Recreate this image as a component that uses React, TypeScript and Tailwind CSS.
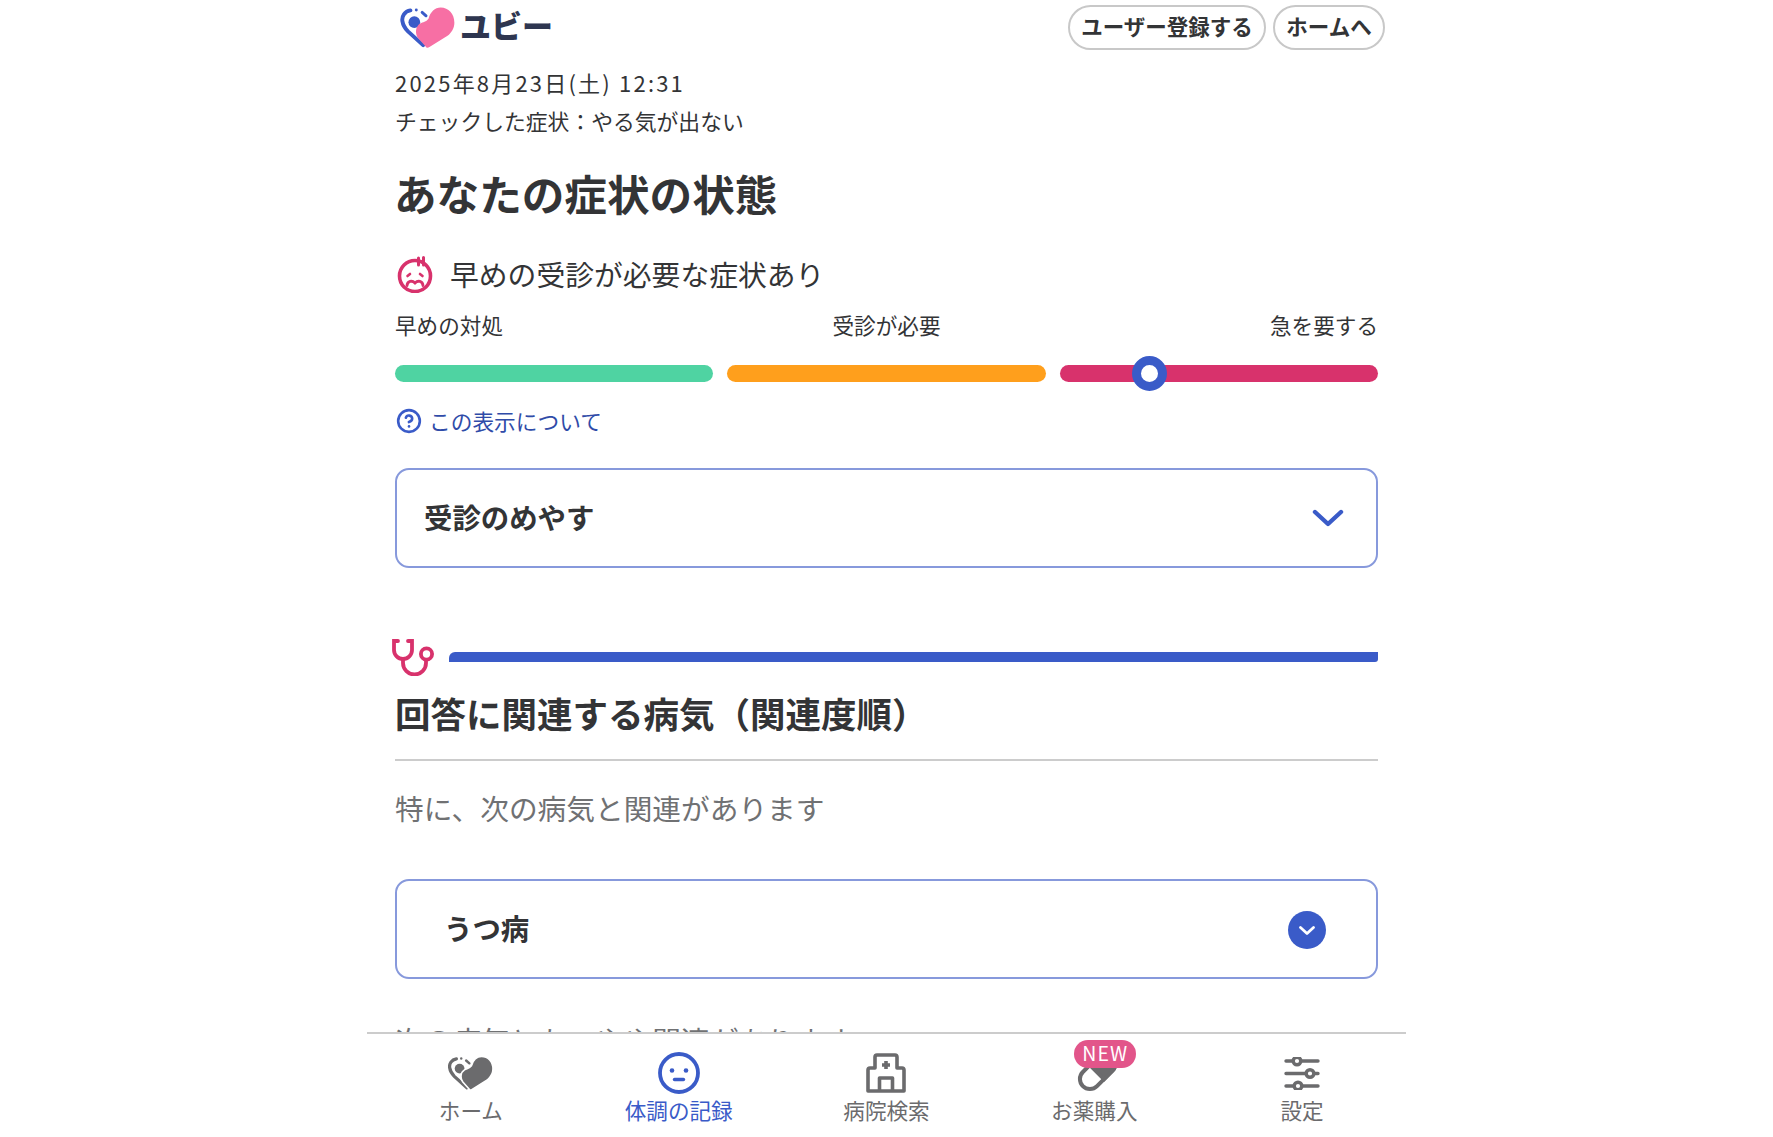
import React from "react";
import { CircleHelp } from "lucide-react";

const font = "font-['Noto_Sans_CJK_JP','Noto_Sans',sans-serif]";

// ロゴのハート（ナビでは色違いで使う）
function HeartMark({
  ring,
  heart,
  gap,
  className,
}: {
  ring: string;
  heart: string;
  gap?: string;
  className: string;
}) {
  return (
    <svg viewBox="0 0 56 43" className={className}>
      <path
        d="M10 3.5C4 4.5 1 9.5 1.8 14.5C2.4 18.5 4.5 22 7.5 25L23 39"
        fill="none"
        stroke={ring}
        strokeWidth="4"
        strokeLinecap="round"
      />
      <circle cx="16" cy="3" r="1.5" fill={ring} />
      <path d="M22 5.5L26 9" fill="none" stroke={ring} strokeWidth="3" strokeLinecap="round" />
      <circle cx="14" cy="15.5" r="6" fill={ring} />
      <path
        d="M26.7 41.7L18 32C14.5 27.5 15 20 20 17C23 15.2 26 15.5 28.5 12C30.5 5 35 0.5 41 0.5C49 0.5 55 7 55 16C55 22 52 26 48 29.5L29.5 41C28.5 41.7 27.5 42 26.7 41.7Z"
        fill={heart}
        stroke={gap ?? "none"}
        strokeWidth={gap ? 2 : 0}
      />
    </svg>
  );
}

function WorriedFace() {
  return (
    <svg viewBox="0 0 36 37" className="h-[37px] w-[36px]" fill="none" stroke="#d8326c" strokeLinecap="round">
      <circle cx="18" cy="20" r="15.5" strokeWidth="3.6" />
      <path d="M21.5 2V9M26.5 1.5V9" strokeWidth="3" />
      <path d="M10.5 20L13 18M25.5 20L23 18" strokeWidth="2.6" />
      <path d="M10 29.5C10.5 25 15 24 18 27C21 24 25.5 25 26 29.5" strokeWidth="2.8" />
    </svg>
  );
}

function Stethoscope() {
  return (
    <svg viewBox="0 0 43 37" className="h-[37px] w-[43px] shrink-0" fill="none" stroke="#d8326c" strokeWidth="3.8" strokeLinecap="round">
      <path d="M7 2H3V11A9 9 0 0 0 21 11V2H17" />
      <path d="M12 20V24A11.5 11.5 0 0 0 35 24V21" />
      <circle cx="35.5" cy="15" r="5.6" />
    </svg>
  );
}

function Chevron({ className, stroke, width }: { className: string; stroke: string; width: number }) {
  return (
    <svg viewBox="0 0 32 18" className={className} fill="none" stroke={stroke} strokeWidth={width} strokeLinecap="round" strokeLinejoin="round">
      <path d="M3 3L16 15L29 3" />
    </svg>
  );
}

function Hospital() {
  return (
    <svg viewBox="0 0 40 40" className="h-[40px] w-[40px]" fill="none" stroke="#6b6b6d" strokeWidth="3.6" strokeLinejoin="round">
      <path d="M2 38V17A2 2 0 0 1 4 15H9V4A2 2 0 0 1 11 2H29A2 2 0 0 1 31 4V15H36A2 2 0 0 1 38 17V38Z" />
      <path d="M13.5 38V25H26.5V38" />
      <path d="M20 8V16M16 12H24" />
    </svg>
  );
}

function Pill() {
  return (
    <svg viewBox="0 0 46 46" className="h-[46px] w-[46px]">
      <g transform="rotate(-45 26 22)">
        <rect x="6" y="12" width="42" height="20" rx="10" fill="#fff" stroke="#6b6b6d" strokeWidth="4" />
        <path d="M26 12H38A10 10 0 0 1 38 32H26Z" fill="#6b6b6d" stroke="#6b6b6d" strokeWidth="4" />
      </g>
    </svg>
  );
}

function Sliders() {
  return (
    <svg viewBox="0 0 36 33" className="h-[33px] w-[36px]" fill="none" stroke="#6b6b6d" strokeWidth="3.4" strokeLinecap="round">
      <path d="M2 4H34M2 16.5H34M2 29H34" />
      <circle cx="13" cy="4" r="3.8" fill="#fff" />
      <circle cx="26" cy="16.5" r="3.8" fill="#fff" />
      <circle cx="14" cy="29" r="3.8" fill="#fff" />
    </svg>
  );
}

function FaceNav() {
  return (
    <svg viewBox="0 0 42 42" className="h-[42px] w-[42px]" fill="none" stroke="#3a5bc8">
      <circle cx="21" cy="21" r="19" strokeWidth="3.8" />
      <circle cx="14" cy="18.5" r="2.3" fill="#3a5bc8" stroke="none" />
      <circle cx="28" cy="18.5" r="2.3" fill="#3a5bc8" stroke="none" />
      <path d="M16.5 27.5H25.5" strokeWidth="3.4" strokeLinecap="round" />
    </svg>
  );
}

const navItems = [
  { label: "ホーム", icon: <HeartMark ring="#6b6b6d" heart="#6b6b6d" gap="#fff" className="h-[35px] w-[46px]" /> },
  { label: "体調の記録", icon: <FaceNav />, active: true },
  { label: "病院検索", icon: <Hospital /> },
  { label: "お薬購入", icon: <Pill />, badge: true },
  { label: "設定", icon: <Sliders /> },
];

export default function App() {
  return (
    <div className={`${font} flex h-screen flex-col items-center overflow-hidden bg-white text-[#333436]`}>
      <div className="flex h-full w-[1039px] flex-col">
        <main className="flex-1 overflow-hidden px-[28px]">
          {/* ヘッダー */}
          <header className="flex h-[50px] items-start justify-between pt-[5px]">
            <div className="ml-[5px] flex items-start gap-[4px] pt-[2px]">
              <HeartMark ring="#3a5bc8" heart="#f76fa4" className="h-[42px] w-[56px]" />
              <span className="text-[31px] leading-[36px] font-black text-[#2e3650]">ユビー</span>
            </div>
            <div className="-mr-[7px] flex gap-[7px]">
              <button className="h-[45px] w-[198px] rounded-full border-2 border-[#c8c8c8] pb-[3px] text-[21.5px] leading-none font-bold">
                ユーザー登録する
              </button>
              <button className="h-[45px] w-[112px] rounded-full border-2 border-[#c8c8c8] pb-[3px] text-[21.5px] leading-none font-bold">
                ホームへ
              </button>
            </div>
          </header>

          <p className="mt-[16px] text-[22px] leading-[32px] tracking-[0.1em]">2025年8月23日(土) 12:31</p>
          <p className="mt-[7px] text-[21.8px] leading-[32px]">チェックした症状：やる気が出ない</p>

          <h1 className="mt-[28px] -ml-[1px] text-[42.6px] leading-[56px] font-bold">あなたの症状の状態</h1>

          <div className="mt-[33px] flex h-[40px] items-center gap-[17px] pl-[2px]">
            <WorriedFace />
            <span className="text-[28.8px] leading-[40px]">早めの受診が必要な症状あり</span>
          </div>

          {/* 緊急度バー */}
          <div className="mt-[16px] flex justify-between text-[21.6px] leading-[30px]">
            <span>早めの対処</span>
            <span>受診が必要</span>
            <span>急を要する</span>
          </div>
          <div className="mt-[25px] flex gap-[14px]">
            <div className="h-[17px] flex-1 rounded-full bg-[#4fd3a2]" />
            <div className="h-[17px] flex-1 rounded-full bg-[#ff9f1c]" />
            <div className="relative h-[17px] flex-1 rounded-full bg-[#d8326c]">
              <div className="absolute top-[-9px] left-[72px] h-[35px] w-[35px] rounded-full border-[9px] border-[#3a5bc8] bg-white" />
            </div>
          </div>

          <div className="mt-[24px] flex h-[30px] items-center gap-[7px] pl-[1px] text-[21.7px] leading-[30px] text-[#2f4ba8]">
            <CircleHelp className="h-[26px] w-[26px] text-[#3a5bc8]" strokeWidth={2.4} />
            <span>この表示について</span>
          </div>

          <div className="mt-[32px] flex h-[100px] items-center justify-between rounded-[14px] border-2 border-[#8799dc] pr-[32px] pl-[27px]">
            <span className="-mt-[2px] text-[28.4px] leading-[40px] font-bold">受診のめやす</span>
            <Chevron className="h-[18px] w-[32px]" stroke="#3a5bc8" width={4.4} />
          </div>

          {/* 関連する病気 */}
          <div className="mt-[71px] -ml-[4px] flex h-[37px] items-start gap-[15px]">
            <Stethoscope />
            <div className="mt-[13px] h-[10px] flex-1 rounded-tl-[6px] rounded-br-[3px] bg-[#3a5bc8]" />
          </div>
          <h2 className="mt-[13px] text-[35.5px] leading-[48px] font-bold">回答に関連する病気（関連度順）</h2>
          <div className="mt-[22px] h-[2px] bg-[#cccccc]" />
          <p className="mt-[27px] text-[28.7px] leading-[40px] text-[#707173]">特に、次の病気と関連があります</p>

          <div className="mt-[51px] flex h-[100px] items-center justify-between rounded-[14px] border-2 border-[#8799dc] pr-[50px] pl-[47px]">
            <span className="-mt-[2px] text-[28.4px] leading-[40px] font-bold">うつ病</span>
            <div className="mt-[2px] flex h-[38px] w-[38px] items-center justify-center rounded-full bg-[#3a5bc8]">
              <Chevron className="h-[9px] w-[16px]" stroke="#fff" width={5.5} />
            </div>
          </div>

          <p className="mt-[41px] text-[28.7px] leading-[40px] text-[#707173]">次の病気とも、やや関連があります</p>
        </main>

        {/* 下部ナビ */}
        <nav className="flex h-[105px] shrink-0 border-t-2 border-[#cccccc] bg-white pt-[16px]">
          {navItems.map((item) => (
            <div key={item.label} className="flex flex-1 flex-col items-center">
              <div className="relative flex h-[46px] w-[46px] items-center justify-center">
                {item.icon}
                {item.badge && (
                  <span className="absolute top-[-10px] left-[3px] flex h-[28px] w-[62px] items-center justify-center rounded-full bg-[#e2558a] pb-[3px] text-[19.5px] leading-none tracking-[0.06em] text-white">
                    NEW
                  </span>
                )}
              </div>
              <span className={`text-[21.6px] leading-[28px] ${item.active ? "text-[#3a5bc8]" : "text-[#6b6b6d]"}`}>
                {item.label}
              </span>
            </div>
          ))}
        </nav>
      </div>
    </div>
  );
}
